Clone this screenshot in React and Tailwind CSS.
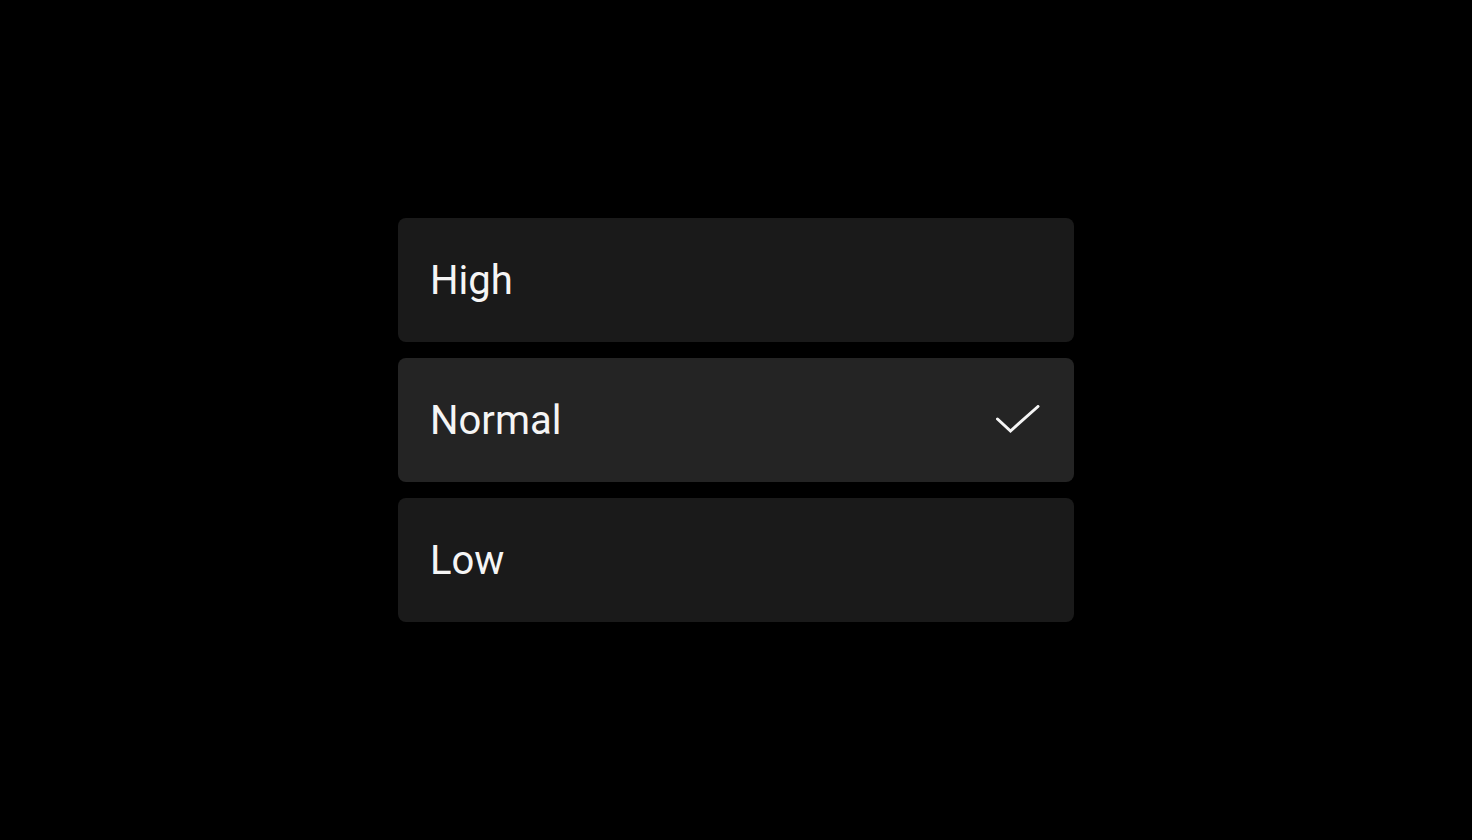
import { useState } from 'react'

const options = ['High', 'Normal', 'Low']

export default function App() {
  const [selected, setSelected] = useState('Normal')

  return (
    <div className="min-h-screen w-full bg-black flex items-center justify-center" style={{ fontFamily: 'Roboto, "Noto Sans", sans-serif' }}>
      <div className="w-[676px] flex flex-col gap-4">
        {options.map(opt => {
          const active = opt === selected
          return (
            <button
              key={opt}
              onClick={() => setSelected(opt)}
              className={`h-[124px] w-full rounded-lg flex items-center justify-between pl-8 pr-[34px] text-left ${active ? 'bg-[#242424]' : 'bg-[#1a1a1a]'}`}
            >
              <span className="text-[40px] leading-none text-[#f5f5f5] pt-[2px]">{opt}</span>
              {active && (
                <svg width="44" height="30" viewBox="0 0 44 30" fill="none">
                  <path d="M1.5 14 L14.5 26 L42 1.5" stroke="#f5f5f5" strokeWidth="3" strokeLinecap="round" strokeLinejoin="miter" />
                </svg>
              )}
            </button>
          )
        })}
      </div>
    </div>
  )
}
